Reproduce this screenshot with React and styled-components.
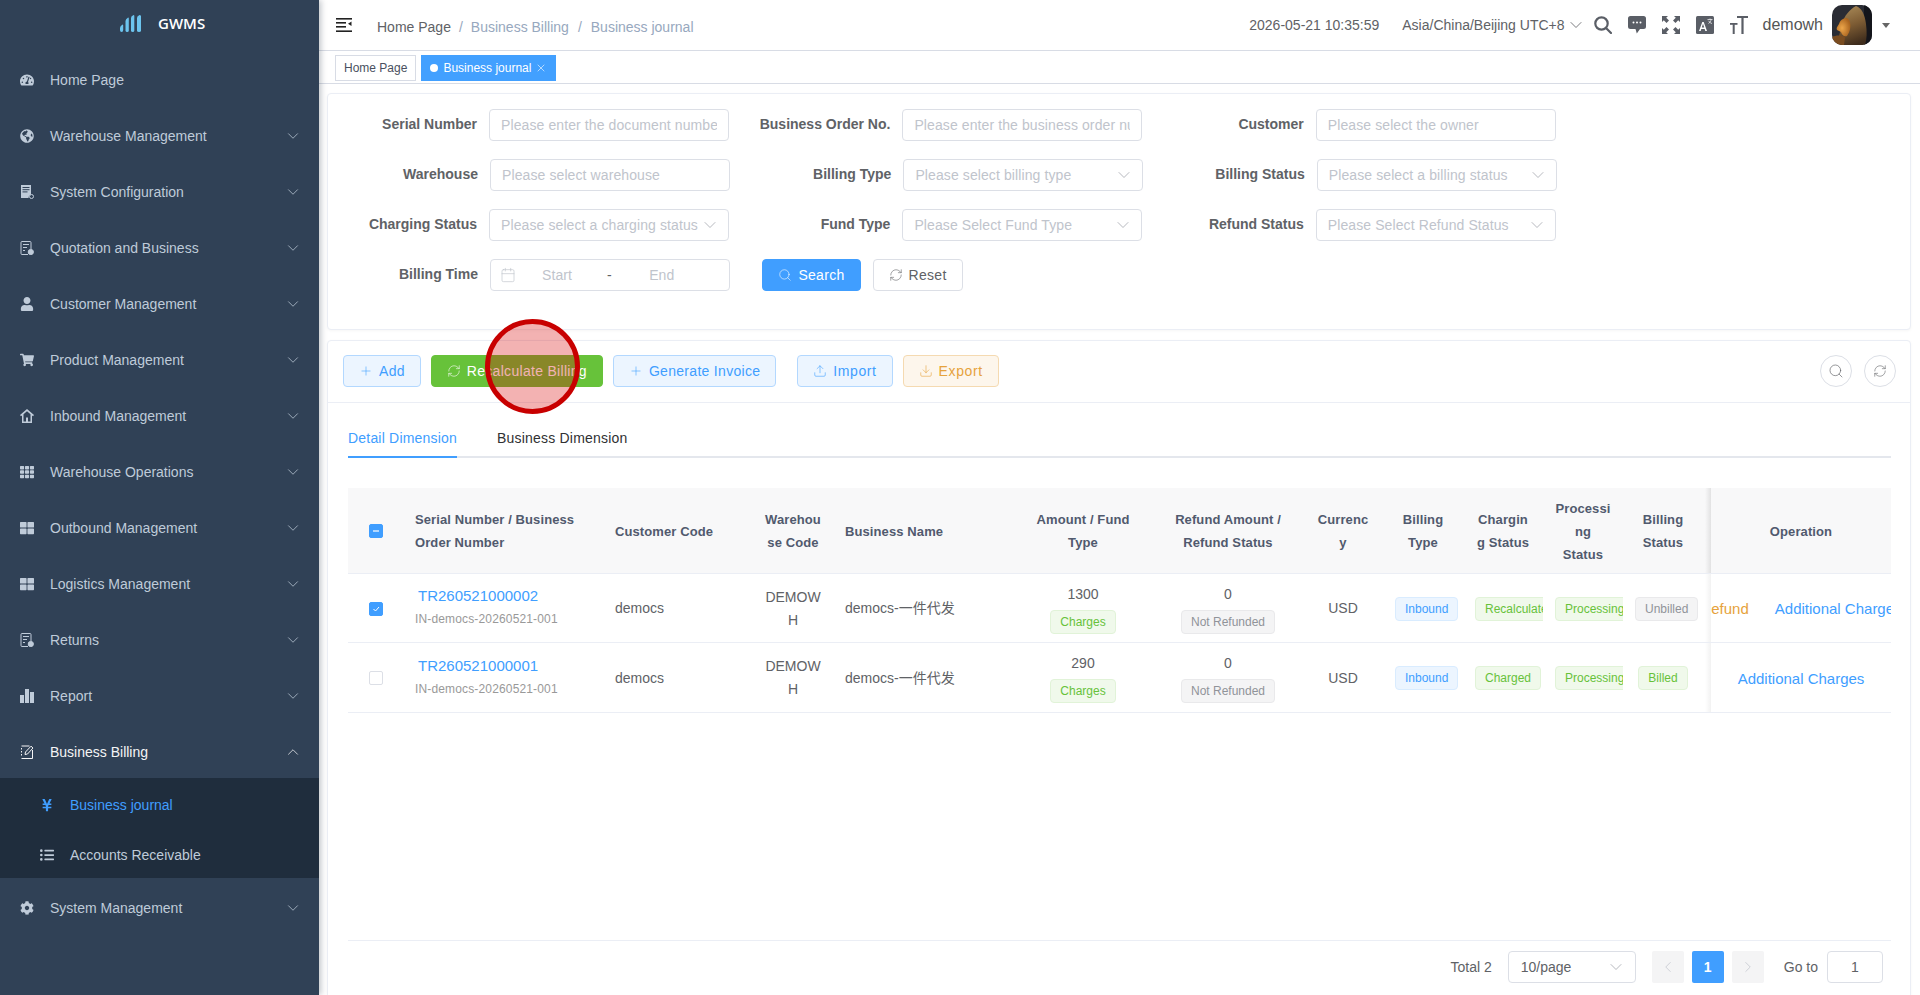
import styled, { createGlobalStyle } from "styled-components";
import {
  FaTachometerAlt, FaGlobeAmericas, FaUser, FaShoppingCart, FaTh, FaThLarge, FaCog, FaYenSign, FaListUl,
} from "react-icons/fa";
import { ChevronDown, ChevronUp, ChevronLeft, ChevronRight, Plus, RefreshCw, Upload, Download, Search, X, Calendar } from "lucide-react";

const Global = createGlobalStyle`
  html, body { margin: 0; padding: 0; height: 100%; overflow: hidden; }
  body { font-family: "Liberation Sans", Arial, "Noto Sans CJK SC", sans-serif; font-size: 14px; color: #606266; background: #fff; }
  * { box-sizing: border-box; }
`;

const Page = styled.div`
  display: flex;
  height: 995px;
  width: 1920px;
  overflow: hidden;
  position: relative;
`;

/* sidebar */
const Side = styled.aside`
  width: 319px;
  flex: none;
  background: #304156;
  box-shadow: 2px 0 6px rgba(0, 21, 41, 0.25);
  z-index: 2;
`;
const Logo = styled.div`
  height: 50px;
  display: flex;
  align-items: center;
  padding: 0 0 4px 120px;
  gap: 16px;
  color: #fff;
  font-family: "Open Sans", sans-serif;
  font-size: 15px;
  font-weight: 600;
`;
const MenuRow = styled.div`
  height: ${(p) => (p.$sub ? 50 : 56)}px;
  display: flex;
  align-items: center;
  padding-left: ${(p) => (p.$sub ? 40 : 20)}px;
  padding-right: 17px;
  padding-top: 3px;
  color: ${(p) => (p.$active ? "#409eff" : p.$open ? "#f4f4f5" : "#bfcbd9")};
`;
const MenuIcon = styled.span`
  width: 14px;
  height: 14px;
  margin-right: 16px;
  display: flex;
  align-items: center;
  justify-content: center;
  flex: none;
  font-size: 14px;
`;
const MenuText = styled.span`
  flex: 1;
`;
const SubMenu = styled.div`
  background: #1f2d3d;
`;

/* top */
const Main = styled.main`
  flex: 1;
  min-width: 0;
  display: flex;
  flex-direction: column;
  height: 995px;
`;
const TopBar = styled.header`
  height: 51px;
  flex: none;
  display: flex;
  align-items: center;
  border-bottom: 1px solid #d8dce5;
  padding: 0 30px 0 17px;
`;
const Crumbs = styled.nav`
  display: flex;
  align-items: flex-start;
  height: 15px;
  overflow: hidden;
  margin: 4px 0 0 25px;
  line-height: 15px;
  color: #97a8be;
  flex: 1;
  gap: 8px;
`;
const CrumbHome = styled.span`
  color: #606266;
`;
const CrumbSep = styled.span`
  margin: 0 ${(p) => (p.$wide ? 1 : 0)}px;
`;
const Clock = styled.span`
  margin-right: 23px;
`;
const Zone = styled.span`
  display: flex;
  align-items: center;
  gap: 1px;
  margin-right: 8px;
`;
const TopIcons = styled.div`
  display: flex;
  align-items: center;
  gap: 16px;
  margin-right: 15px;
  color: #5a5e66;
`;
const UserName = styled.span`
  font-size: 16px;
  color: #555;
  margin-right: 9px;
`;
const Avatar = styled.span`
  width: 40px;
  height: 40px;
  border-radius: 10px;
  overflow: hidden;
  display: block;
`;
const Caret = styled.span`
  margin-left: 10px;
  width: 0;
  height: 0;
  border-left: 4px solid transparent;
  border-right: 4px solid transparent;
  border-top: 5px solid #666;
`;

const TagsBar = styled.div`
  height: 33px;
  flex: none;
  display: flex;
  align-items: center;
  gap: 5px;
  padding: 2px 0 0 16px;
  border-bottom: 1px solid #d8dce5;
  font-size: 12px;
`;
const PageTag = styled.span`
  height: 26px;
  display: flex;
  align-items: center;
  padding: 0 8px;
  border: 1px solid ${(p) => (p.$active ? "#42a0ff" : "#d8dce5")};
  background: ${(p) => (p.$active ? "#42a0ff" : "#fff")};
  color: ${(p) => (p.$active ? "#fff" : "#495060")};
`;
const Dot = styled.i`
  width: 8px;
  height: 8px;
  border-radius: 50%;
  background: #fff;
  margin-right: 5px;
`;
const TagClose = styled(X)`
  margin-left: 4px;
`;

/* content */
const Content = styled.div`
  flex: 1;
  min-height: 0;
  display: flex;
  flex-direction: column;
  padding: 9px 9px 0 8px;
  gap: 10px;
`;
const Card = styled.section`
  border: 1px solid #ebeef5;
  border-radius: 4px;
  background: #fff;
  box-shadow: 0 1px 3px rgba(0, 0, 0, 0.04);
`;
const SearchCard = styled(Card)`
  height: 237px;
  flex: none;
  padding-top: 15px;
  display: grid;
  grid-template-columns: repeat(3, 413.4px);
  grid-auto-rows: 32px;
  row-gap: 18px;
`;
const Field = styled.div`
  display: flex;
  align-items: center;
  margin-left: ${(p) => (p.$even ? 1 : 0)}px;
`;
const FieldLabel = styled.label`
  width: 149px;
  margin-right: 12px;
  padding-bottom: 2px;
  text-align: right;
  font-weight: 700;
  white-space: nowrap;
`;
const InputBox = styled.div`
  width: 240px;
  height: 32px;
  border: 1px solid #dcdfe6;
  border-radius: 4px;
  display: flex;
  align-items: center;
  padding: 0 11px;
  color: #c0c4cc;
  overflow: hidden;
  white-space: nowrap;
  letter-spacing: 0.1px;
`;
const InputText = styled.span`
  flex: 1;
  min-width: 0;
  overflow: hidden;
`;
const SelectArrow = styled(ChevronDown)`
  flex: none;
  margin-right: -3px;
  color: #a8abb2;
`;
const RangeIcon = styled(Calendar)`
  flex: none;
  margin: 0 -9px 0 -2px;
`;
const RangeWord = styled.span`
  width: 100px;
  flex: none;
  text-align: center;
`;
const RangeDash = styled.span`
  color: #606266;
`;
const SearchActions = styled.div`
  display: flex;
  gap: 12px;
  padding-left: 21px;
`;
const tones = {
  primary: { bg: "#409eff", border: "#409eff", color: "#fff" },
  plain: { bg: "#fff", border: "#dcdfe6", color: "#606266" },
  blue: { bg: "#ecf5ff", border: "#b3d8ff", color: "#409eff" },
  green: { bg: "#67c23a", border: "#67c23a", color: "#fff" },
  orange: { bg: "#fdf6ec", border: "#f5dab1", color: "#e6a23c" },
};
const Btn = styled.button`
  height: 32px;
  border-radius: 4px;
  border: 1px solid ${(p) => tones[p.$tone].border};
  background: ${(p) => tones[p.$tone].bg};
  color: ${(p) => tones[p.$tone].color};
  display: inline-flex;
  align-items: center;
  gap: 6px;
  padding: 0 15px;
  font: inherit;
  letter-spacing: ${(p) => p.$track || 0.3}px;
  white-space: nowrap;
  margin-left: ${(p) => p.$push || 0}px;
`;

const ListCard = styled(Card)`
  flex: 1;
  margin-bottom: -12px;
  display: flex;
  flex-direction: column;
  min-height: 0;
`;
const Toolbar = styled.div`
  height: 62px;
  flex: none;
  display: flex;
  align-items: center;
  padding: 0 14px 1px 15px;
  gap: 10px;
  border-bottom: 1px solid #ebeef5;
`;
const ToolRight = styled.div`
  margin-left: auto;
  display: flex;
  gap: 12px;
`;
const RoundBtn = styled.span`
  width: 32px;
  height: 32px;
  border-radius: 50%;
  border: 1px solid #dcdfe6;
  display: flex;
  align-items: center;
  justify-content: center;
  color: #606266;
`;
const Tabs = styled.div`
  margin: 20px 19px 0 20px;
  display: flex;
  height: 35px;
  flex: none;
  border-bottom: 2px solid #e4e7ed;
  gap: 40px;
`;
const Tab = styled.div`
  height: 35px;
  padding-top: 7px;
  letter-spacing: 0.2px;
  color: ${(p) => (p.$active ? "#409eff" : "#303133")};
  border-bottom: 2px solid ${(p) => (p.$active ? "#409eff" : "transparent")};
`;
const TableWrap = styled.div`
  flex: 1;
  margin: 30px 19px 0 20px;
`;
const Grid = styled.table`
  width: 1543px;
  table-layout: fixed;
  border-collapse: collapse;
`;
const Th = styled.th`
  height: 85px;
  padding: ${(p) => (p.$bare ? 0 : "2px 12px 0")};
  background: #f8f8f9;
  font-size: 13px;
  line-height: 23px;
  font-weight: 700;
  color: #515a6e;
  text-align: ${(p) => (p.$left ? "left" : "center")};
  overflow-wrap: break-word;
  border-bottom: 1px solid #ebeef5;
  letter-spacing: 0.1px;
`;
const Td = styled.td`
  height: 69.5px;
  padding: ${(p) => (p.$bare ? 0 : "2px 12px 0")};
  line-height: 23px;
  overflow: hidden;
  text-align: ${(p) => (p.$left ? "left" : "center")};
  overflow-wrap: break-word;
  border-bottom: 1px solid #ebeef5;
`;
const FixedTh = styled(Th)`
  position: relative;
  &::before {
    content: "";
    position: absolute;
    top: 0;
    bottom: 0;
    left: -6px;
    width: 6px;
    background: linear-gradient(to right, transparent, rgba(0, 0, 0, 0.09));
  }
`;
const FixedTd = styled.td`
  height: 69.5px;
  padding: 2px 0 0;
  border-bottom: 1px solid #ebeef5;
  position: relative;
  &::before {
    content: "";
    position: absolute;
    top: 0;
    bottom: 0;
    left: -6px;
    width: 6px;
    background: linear-gradient(to right, transparent, rgba(0, 0, 0, 0.05));
  }
`;
const OpCell = styled.div`
  display: flex;
  justify-content: center;
  white-space: nowrap;
  gap: 26px;
  overflow: hidden;
  font-size: 15px;
`;
const OpLink = styled.span`
  color: ${(p) => (p.$warn ? "#e6a23c" : "#409eff")};
  flex: none;
`;
const Check = styled.span`
  width: 14px;
  height: 14px;
  border-radius: 2px;
  border: 1px solid ${(p) => (p.$on ? "#409eff" : "#dcdfe6")};
  background: ${(p) => (p.$on ? "#409eff" : "#fff")};
  display: inline-flex;
  align-items: center;
  justify-content: center;
  vertical-align: middle;
  margin-left: 21px;
`;
const SerialLink = styled.div`
  color: #409eff;
  font-size: 15px;
  padding-left: 3px;
  margin: -2px 0 1px;
`;
const SubLine = styled.div`
  color: #999;
  font-size: 12px;
  letter-spacing: 0.15px;
`;
const statusTones = {
  blue: { bg: "#ecf5ff", border: "#d9ecff", color: "#409eff" },
  green: { bg: "#f0f9eb", border: "#e1f3d8", color: "#67c23a" },
  gray: { bg: "#f4f4f5", border: "#e9e9eb", color: "#909399" },
};
const StatusTag = styled.span`
  display: inline-block;
  height: 24px;
  line-height: 22px;
  padding: 0 9px;
  font-size: 12px;
  border-radius: 4px;
  white-space: nowrap;
  border: 1px solid ${(p) => statusTones[p.$tone].border};
  background: ${(p) => statusTones[p.$tone].bg};
  color: ${(p) => statusTones[p.$tone].color};
  margin-top: ${(p) => p.$gap || 0}px;
`;
const Stack = styled.div`
  line-height: 16px;
  margin-top: 2px;
`;

const Pager = styled.footer`
  height: 66px;
  flex: none;
  margin: 0 19px 0 20px;
  border-top: 1px solid #ebeef5;
  display: flex;
  justify-content: flex-end;
  align-items: flex-start;
  padding: 10px 8px 0 0;
`;
const PagerText = styled.span`
  line-height: 32px;
  margin-right: ${(p) => p.$gap}px;
`;
const PageSelect = styled.div`
  width: 128px;
  height: 32px;
  border: 1px solid #dcdfe6;
  border-radius: 4px;
  display: flex;
  align-items: center;
  justify-content: space-between;
  padding: 0 12px;
  margin-right: 16px;
`;
const PageBtn = styled.span`
  width: 32px;
  height: 32px;
  border-radius: 2px;
  margin-right: ${(p) => p.$gap ?? 8}px;
  display: flex;
  align-items: center;
  justify-content: center;
  background: ${(p) => (p.$active ? "#409eff" : "#f4f4f5")};
  color: ${(p) => (p.$active ? "#fff" : "#c0c4cc")};
  font-weight: 700;
`;
const GotoBox = styled.span`
  width: 56px;
  height: 32px;
  border: 1px solid #dcdfe6;
  border-radius: 4px;
  display: flex;
  align-items: center;
  justify-content: center;
`;

/* click marker from the recording */
const ClickMark = styled.div`
  position: absolute;
  left: 485px;
  top: 319px;
  width: 95px;
  height: 95px;
  border-radius: 50%;
  border: 5px solid #c80000;
  background: rgba(215, 0, 0, 0.3);
  z-index: 5;
`;

const svgProps = { width: 14, height: 14, viewBox: "0 0 14 14", fill: "currentColor" };

const ConfigIcon = () => (
  <svg {...svgProps}>
    <path d="M1 0h10v9.500a3.500 3.500 0 0 0-2.500 3.500H1z" />
    <rect x="2.500" y="2" width="7" height="1" fill="#304156" />
    <rect x="2.500" y="4.200" width="7" height="1" fill="#304156" />
    <rect x="2.500" y="6.400" width="5" height="1" fill="#304156" />
    <circle cx="11.500" cy="11.500" r="2" fill="none" stroke="currentColor" />
  </svg>
);
const QuoteIcon = () => (
  <svg {...svgProps} fill="none" stroke="currentColor" strokeWidth="1">
    <path d="M8 13.500H2a1 1 0 0 1-1-1v-11a1 1 0 0 1 1-1h8a1 1 0 0 1 1 1V8" />
    <path d="M3 3.500h6M3 6.500h4M3 9.500h2" />
    <circle cx="10.800" cy="11" r="2.600" fill="currentColor" />
  </svg>
);
const EditIcon = () => (
  <svg {...svgProps} fill="none" stroke="currentColor" strokeWidth="1">
    <path d="M1.500 1h8M12.500 5v8.500h-11M1.500 3v1.500M1.500 6v1.500M1.500 9v1.500" />
    <path d="M5 9.500l.5-2.500L11 1.200 13 3 7.500 9z" />
  </svg>
);
const BarsIcon = () => (
  <svg {...svgProps}>
    <rect x="0" y="6" width="4" height="8" />
    <rect x="5" y="0" width="4" height="14" />
    <rect x="10" y="3" width="4" height="11" />
  </svg>
);
const HouseIcon = () => (
  <svg {...svgProps}>
    <path fillRule="evenodd" d="M7 0l7 6-1 1.200-1-.8V14H2V6.400l-1 .8L0 6zM3.500 5.300V12.500h2.500V8.500h2v4h2.500V5.300L7 2.200z" />
  </svg>
);

const LogoMark = () => (
  <svg width="22" height="17" viewBox="0 0 22 17" fill="#6cc4ee">
    <path d="M0 13q0-2 2.500-3.500.7 0 .7 1V15q0 2-1.600 2Q0 17 0 15z" />
    <path d="M5.500 6q0-2 2.600-3.500.7 0 .7 1V15.500q0 1.500-1.600 1.500-1.700 0-1.700-1.500z" />
    <path d="M11 3q0-2 2.600-3 .7 0 .7 1V15.500q0 1.500-1.600 1.500-1.700 0-1.700-1.500z" />
    <path d="M17 3q0-2 2.600-3 .9 0 1.400 1v14.500q0 1.500-2 1.500-2 0-2-1.500z" />
  </svg>
);

const Hamburger = () => (
  <svg width="16" height="14" viewBox="0 0 16 14" fill="#222">
    <rect width="16" height="1.600" />
    <rect y="4" width="10" height="1.600" />
    <rect y="8" width="10" height="1.600" />
    <rect y="12.400" width="16" height="1.600" />
    <path d="M15.500 3.500v4.500l-3.500-2.200z" />
  </svg>
);
const LoupeIcon = () => (
  <svg width="18" height="18" viewBox="0 0 18 18" fill="none" stroke="currentColor" strokeWidth="2.200">
    <circle cx="7.500" cy="7.500" r="6.200" />
    <path d="M12 12l5 5" strokeLinecap="round" />
  </svg>
);
const BubbleIcon = () => (
  <svg width="18" height="18" viewBox="0 0 18 18" fill="currentColor">
    <path d="M2.500 0h13A2.500 2.500 0 0 1 18 2.500v8a2.500 2.500 0 0 1-2.500 2.500H12l-3.200 4.500L7.500 13h-5A2.500 2.500 0 0 1 0 10.500v-8A2.500 2.500 0 0 1 2.500 0z" />
    <circle cx="5.500" cy="6.500" r="1" fill="#fff" />
    <circle cx="9" cy="6.500" r="1" fill="#fff" />
    <circle cx="12.500" cy="6.500" r="1" fill="#fff" />
  </svg>
);
const FullIcon = () => (
  <svg width="18" height="18" viewBox="0 0 18 18" fill="currentColor">
    <path d="M0 0h6L4.200 1.800 7 4.500 4.500 7 1.800 4.200 0 6z" />
    <path d="M18 0v6l-1.800-1.800L13.500 7 11 4.500l2.800-2.700L12 0z" />
    <path d="M0 18v-6l1.800 1.800L4.500 11 7 13.500l-2.800 2.700L6 18z" />
    <path d="M18 18h-6l1.800-1.800L11 13.500l2.500-2.500 2.700 2.800L18 12z" />
  </svg>
);
const TranslateIcon = () => (
  <svg width="18" height="18" viewBox="0 0 18 18">
    <rect width="18" height="18" rx="1.500" fill="currentColor" />
    <path d="M3 15l3.300-9h1.400l3.300 9H9.300l-.6-2H5.300l-.6 2zm2.800-3.400h2.400L7 7.800z" fill="#fff" />
    <path d="M11.500 3.500h5M14 2.500v1M12.500 7.500c1.500-1 2.400-2.300 2.600-4M12.500 4.800c.6 1.200 2 2.300 3.500 2.700" stroke="#fff" strokeWidth=".7" fill="none" />
  </svg>
);
const FontIcon = () => (
  <svg width="18" height="18" viewBox="0 0 18 18" fill="currentColor">
    <rect x="7" y="0" width="11" height="2" />
    <rect x="11.400" y="0" width="2.200" height="18" />
    <rect x="0" y="7" width="7.500" height="1.800" />
    <rect x="2.700" y="7" width="2" height="11" />
  </svg>
);
const Lion = () => (
  <svg width="40" height="40" viewBox="0 0 40 40">
    <defs>
      <linearGradient id="mane" x1="0.3" y1="0" x2="0.6" y2="1">
        <stop offset="0" stopColor="#a98a58" />
        <stop offset="0.5" stopColor="#7d5c34" />
        <stop offset="1" stopColor="#3e2c1c" />
      </linearGradient>
      <radialGradient id="face" cx="0.4" cy="0.55" r="0.6">
        <stop offset="0" stopColor="#eda64a" />
        <stop offset="1" stopColor="#a9641f" />
      </radialGradient>
    </defs>
    <rect width="40" height="40" fill="#2a2c34" />
    <path d="M32 0h8v40h-8z" fill="#14151b" />
    <path d="M24 1c6 2 9 9 10 18 1 8 1 15-1 21H4c2-6 4-12 6-21 2-8 8-15 14-18z" fill="url(#mane)" />
    <path d="M11 14c3-2 6-1 7 3 1 5 0 10-3 14-3 1-5-1-6-4l-4-2c-1-2 0-3 2-6 1-3 2-4 4-5z" fill="url(#face)" />
    <path d="M0 32c4-2 9-2 13 0l-1 8H0z" fill="#7a4c20" />
  </svg>
);

const menu = [
  ["Home Page", <FaTachometerAlt />],
  ["Warehouse Management", <FaGlobeAmericas />, 1],
  ["System Configuration", <ConfigIcon />, 1],
  ["Quotation and Business", <QuoteIcon />, 1],
  ["Customer Management", <FaUser />, 1],
  ["Product Management", <FaShoppingCart />, 1],
  ["Inbound Management", <HouseIcon />, 1],
  ["Warehouse Operations", <FaTh />, 1],
  ["Outbound Management", <FaThLarge />, 1],
  ["Logistics Management", <FaThLarge />, 1],
  ["Returns", <QuoteIcon />, 1],
  ["Report", <BarsIcon />, 1],
];

const heads = [
  ["Serial Number / Business Order Number", 1],
  ["Customer Code", 1],
  ["Warehouse Code"],
  ["Business Name", 1],
  ["Amount / Fund Type"],
  ["Refund Amount / Refund Status"],
  ["Currency"],
  ["Billing Type"],
  ["Charging Status"],
  ["Processing Status"],
  ["Billing Status"],
];
const widths = [55, 200, 150, 80, 180, 140, 150, 80, 80, 80, 80, 80, 8, 180];

const rows = [
  { no: "TR260521000002", amount: 1300, charge: "Recalculate", bill: "Unbilled", billTone: "gray", on: true, refund: true },
  { no: "TR260521000001", amount: 290, charge: "Charged", bill: "Billed", billTone: "green" },
];

const Chev = <ChevronDown size={18} strokeWidth={1} />;
const Arrow = <SelectArrow size={20} strokeWidth={1} />;

export default function App() {
  return (
    <Page>
      <Global />
      <Side>
        <Logo>
          <LogoMark />
          GWMS
        </Logo>
        {menu.map(([name, icon, more]) => (
          <MenuRow key={name}>
            <MenuIcon>{icon}</MenuIcon>
            <MenuText>{name}</MenuText>
            {more && Chev}
          </MenuRow>
        ))}
        <MenuRow $open>
          <MenuIcon><EditIcon /></MenuIcon>
          <MenuText>Business Billing</MenuText>
          <ChevronUp size={18} strokeWidth={1} />
        </MenuRow>
        <SubMenu>
          <MenuRow $sub $active>
            <MenuIcon><FaYenSign /></MenuIcon>
            <MenuText>Business journal</MenuText>
          </MenuRow>
          <MenuRow $sub>
            <MenuIcon><FaListUl /></MenuIcon>
            <MenuText>Accounts Receivable</MenuText>
          </MenuRow>
        </SubMenu>
        <MenuRow>
          <MenuIcon><FaCog /></MenuIcon>
          <MenuText>System Management</MenuText>
          {Chev}
        </MenuRow>
      </Side>

      <Main>
        <TopBar>
          <Hamburger />
          <Crumbs>
            <CrumbHome>Home Page</CrumbHome>
            <CrumbSep>/</CrumbSep>
            <span>Business Billing</span>
            <CrumbSep $wide>/</CrumbSep>
            <span>Business journal</span>
          </Crumbs>
          <Clock>2026-05-21 10:35:59</Clock>
          <Zone>Asia/China/Beijing UTC+8 <ChevronDown size={20} strokeWidth={1} /></Zone>
          <TopIcons>
            <LoupeIcon />
            <BubbleIcon />
            <FullIcon />
            <TranslateIcon />
            <FontIcon />
          </TopIcons>
          <UserName>demowh</UserName>
          <Avatar><Lion /></Avatar>
          <Caret />
        </TopBar>
        <TagsBar>
          <PageTag>Home Page</PageTag>
          <PageTag $active>
            <Dot />
            Business journal
            <TagClose size={12} strokeWidth={1.2} />
          </PageTag>
        </TagsBar>

        <Content>
          <SearchCard>
            <Field>
              <FieldLabel>Serial Number</FieldLabel>
              <InputBox><InputText>Please enter the document number</InputText></InputBox>
            </Field>
            <Field>
              <FieldLabel>Business Order No.</FieldLabel>
              <InputBox><InputText>Please enter the business order number</InputText></InputBox>
            </Field>
            <Field>
              <FieldLabel>Customer</FieldLabel>
              <InputBox><InputText>Please select the owner</InputText></InputBox>
            </Field>
            <Field $even>
              <FieldLabel>Warehouse</FieldLabel>
              <InputBox><InputText>Please select warehouse</InputText></InputBox>
            </Field>
            <Field $even>
              <FieldLabel>Billing Type</FieldLabel>
              <InputBox><InputText>Please select billing type</InputText>{Arrow}</InputBox>
            </Field>
            <Field $even>
              <FieldLabel>Billing Status</FieldLabel>
              <InputBox><InputText>Please select a billing status</InputText>{Arrow}</InputBox>
            </Field>
            <Field>
              <FieldLabel>Charging Status</FieldLabel>
              <InputBox><InputText>Please select a charging status</InputText>{Arrow}</InputBox>
            </Field>
            <Field>
              <FieldLabel>Fund Type</FieldLabel>
              <InputBox><InputText>Please Select Fund Type</InputText>{Arrow}</InputBox>
            </Field>
            <Field>
              <FieldLabel>Refund Status</FieldLabel>
              <InputBox><InputText>Please Select Refund Status</InputText>{Arrow}</InputBox>
            </Field>
            <Field $even>
              <FieldLabel>Billing Time</FieldLabel>
              <InputBox>
                <RangeIcon size={16} strokeWidth={1} />
                <RangeWord>Start</RangeWord>
                <RangeDash>-</RangeDash>
                <RangeWord>End</RangeWord>
              </InputBox>
            </Field>
            <SearchActions>
              <Btn $tone="primary"><Search size={14} strokeWidth={1} />Search</Btn>
              <Btn $tone="plain"><RefreshCw size={14} strokeWidth={1} />Reset</Btn>
            </SearchActions>
          </SearchCard>

          <ListCard>
            <Toolbar>
              <Btn $tone="blue"><Plus size={14} strokeWidth={1} />Add</Btn>
              <Btn $tone="green"><RefreshCw size={14} strokeWidth={1} />Recalculate Billing</Btn>
              <Btn $tone="blue"><Plus size={14} strokeWidth={1} />Generate Invoice</Btn>
              <Btn $tone="blue" $push={11} $track={0.6}><Upload size={14} strokeWidth={1} />Import</Btn>
              <Btn $tone="orange" $track={0.6}><Download size={14} strokeWidth={1} />Export</Btn>
              <ToolRight>
                <RoundBtn><Search size={16} strokeWidth={1} /></RoundBtn>
                <RoundBtn><RefreshCw size={14} strokeWidth={1} /></RoundBtn>
              </ToolRight>
            </Toolbar>
            <Tabs>
              <Tab $active>Detail Dimension</Tab>
              <Tab>Business Dimension</Tab>
            </Tabs>
            <TableWrap>
              <Grid>
                <colgroup>
                  {widths.map((w, i) => <col key={i} width={w} />)}
                </colgroup>
                <thead>
                  <tr>
                    <Th $left $bare>
                      <Check $on>
                        <svg width="8" height="8" viewBox="0 0 8 8"><path d="M1 4h6" stroke="#fff" strokeWidth="1.200" /></svg>
                      </Check>
                    </Th>
                    {heads.map(([h, left]) => <Th key={h} $left={left}>{h}</Th>)}
                    <Th $bare />
                    <FixedTh>Operation</FixedTh>
                  </tr>
                </thead>
                <tbody>
                  {rows.map((r) => (
                    <tr key={r.no}>
                      <Td $left $bare>
                        <Check $on={r.on}>
                          {r.on && <svg width="10" height="10" viewBox="0 0 10 10"><path d="M2.500 5l2 2 3.500-4" stroke="#fff" fill="none" /></svg>}
                        </Check>
                      </Td>
                      <Td $left>
                        <SerialLink>{r.no}</SerialLink>
                        <SubLine>IN-democs-20260521-001</SubLine>
                      </Td>
                      <Td $left>democs</Td>
                      <Td>DEMOWH</Td>
                      <Td $left>democs-一件代发</Td>
                      <Td>
                        <Stack>
                          {r.amount}
                          <div><StatusTag $tone="green" $gap={8}>Charges</StatusTag></div>
                        </Stack>
                      </Td>
                      <Td>
                        <Stack>
                          0
                          <div><StatusTag $tone="gray" $gap={8}>Not Refunded</StatusTag></div>
                        </Stack>
                      </Td>
                      <Td>USD</Td>
                      <Td><StatusTag $tone="blue">Inbound</StatusTag></Td>
                      <Td><StatusTag $tone="green">{r.charge}</StatusTag></Td>
                      <Td><StatusTag $tone="green">Processing</StatusTag></Td>
                      <Td><StatusTag $tone={r.billTone}>{r.bill}</StatusTag></Td>
                      <Td $bare />
                      <FixedTd>
                        <OpCell>
                          {r.refund && <OpLink $warn>Refund</OpLink>}
                          <OpLink>Additional Charges</OpLink>
                        </OpCell>
                      </FixedTd>
                    </tr>
                  ))}
                </tbody>
              </Grid>
            </TableWrap>
            <Pager>
              <PagerText $gap={16}>Total 2</PagerText>
              <PageSelect>10/page <SelectArrow size={20} strokeWidth={1} /></PageSelect>
              <PageBtn><ChevronLeft size={18} strokeWidth={1} /></PageBtn>
              <PageBtn $active>1</PageBtn>
              <PageBtn $gap={20}><ChevronRight size={18} strokeWidth={1} /></PageBtn>
              <PagerText $gap={9}>Go to</PagerText>
              <GotoBox>1</GotoBox>
            </Pager>
          </ListCard>
        </Content>
      </Main>
      <ClickMark />
    </Page>
  );
}
